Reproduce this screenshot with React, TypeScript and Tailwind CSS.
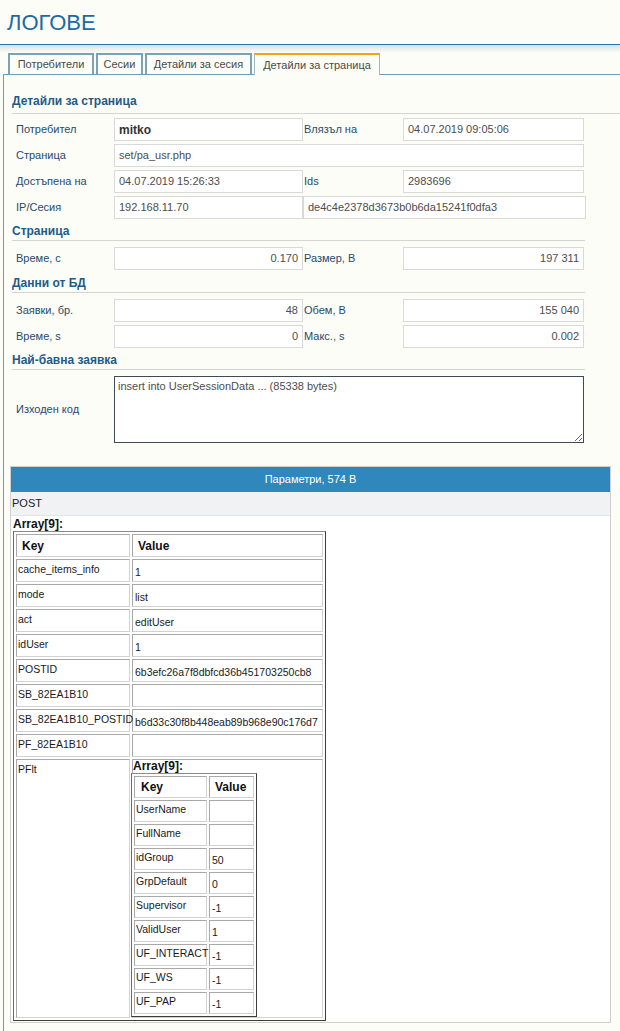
import React from "react";

type P = { children?: React.ReactNode; className?: string };

const Box = ({
  children,
  className = "",
  right = false,
  bold = false,
}: P & { right?: boolean; bold?: boolean }) => (
  <div
    className={
      "flex h-[23px] shrink-0 items-center whitespace-nowrap border border-[#d9d9d9] bg-white px-[4px] " +
      (right ? "justify-end " : "") +
      (bold ? "text-[12px] font-bold text-[#333] " : "text-[11px] text-[#4d4d4d] ") +
      className
    }
  >
    {children}
  </div>
);

const Label = ({ children, className = "" }: P) => (
  <div className={"shrink-0 text-[11px] text-[#284a6c] " + className}>{children}</div>
);

const Heading = ({ children, className = "" }: P) => (
  <div
    className={
      "ml-[8px] border-b border-[#d4d4d4] text-[12px] font-bold leading-[14px] text-[#1e5b8a] " +
      className
    }
  >
    {children}
  </div>
);

const postRows: [string, string][] = [
  ["cache_items_info", "1"],
  ["mode", "list"],
  ["act", "editUser"],
  ["idUser", "1"],
  ["POSTID", "6b3efc26a7f8dbfcd36b451703250cb8"],
  ["SB_82EA1B10", ""],
  ["SB_82EA1B10_POSTID", "b6d33c30f8b448eab89b968e90c176d7"],
  ["PF_82EA1B10", ""],
];

const pfltRows: [string, string][] = [
  ["UserName", ""],
  ["FullName", ""],
  ["idGroup", "50"],
  ["GrpDefault", "0"],
  ["Supervisor", "-1"],
  ["ValidUser", "1"],
  ["UF_INTERACT", "-1"],
  ["UF_WS", "-1"],
  ["UF_PAP", "-1"],
];

const tableCls =
  "table-fixed border-separate border-spacing-[2px] border border-t-[#8a8a8a] border-l-[#6a6a6a] border-r-[#3c3c3c] border-b-[#3c3c3c] bg-white";
const cell = "border border-t-[#a8a8a8] border-l-[#a8a8a8] border-r-[#d2d2d2] border-b-[#d2d2d2]";

const ArrayTitle = () => (
  <div className="text-[12px] font-bold leading-[13px] text-[#111]">Array[9]:</div>
);

const Nested = () => (
  <table className={tableCls + " -ml-[2px] w-[126px]"}>
    <thead>
      <tr>
        <th className={cell + " h-[22px] w-[73px] pl-[6px] text-left text-[12px] font-bold text-[#111]"}>Key</th>
        <th className={cell + " h-[22px] pl-[5px] text-left text-[12px] font-bold text-[#111]"}>Value</th>
      </tr>
    </thead>
    <tbody>
      {pfltRows.map(([k, v]) => (
        <tr key={k}>
          <td className={cell + " h-[22px] whitespace-nowrap pl-[1px] pt-[2px] align-top leading-[13px]"}>{k}</td>
          <td className={cell + " h-[22px] pl-[2px] pt-[5px] align-top leading-[13px]"}>{v}</td>
        </tr>
      ))}
    </tbody>
  </table>
);

export default function App() {
  return (
    <div className="flex min-h-[1031px] flex-col bg-[#fcfdf6] font-['Liberation_Sans',Arial,sans-serif]">
      <div className="flex h-[45px] items-center border-b border-[#2a74a8] px-[7px]">
        <h1 className="text-[22px] font-normal text-[#1b6aa6]">ЛОГОВЕ</h1>
      </div>
      <div className="h-[8px] bg-gradient-to-b from-[#dde2e1] to-[#fcfdf6]" />

      <div className="flex items-end gap-[2px] pl-[8px]">
        {["Потребители", "Сесии", "Детайли за сесия"].map((t, i) => (
          <div
            key={t}
            className={
              "flex h-[21px] items-center justify-center border-2 border-b-0 border-[#7ba2b5] text-[11px] text-[#4a4a4a] " +
              (i === 0 ? "w-[86px]" : i === 1 ? "w-[47px]" : "w-[107px]")
            }
          >
            {t}
          </div>
        ))}
        <div className="relative z-10 -mb-px flex h-[22px] w-[126px] items-center justify-center border border-b-0 border-t-2 border-[#9db7c4] border-t-[#f5a01a] bg-[#fcfdf6] text-[11px] text-[#4a4a4a]">
          Детайли за страница
        </div>
      </div>

      <div className="ml-[3px] flex flex-1 flex-col border-l border-t border-[#6f9cb1] pl-0">
        <Heading className="mt-[19px] pb-[5px]">Детайли за страница</Heading>

        <div className="mt-[4px] flex flex-col gap-[3px] pl-[12px]">
          <div className="flex items-center">
            <Label className="w-[98px]">Потребител</Label>
            <Box bold className="w-[189px]">mitko</Box>
            <Label className="w-[100px] pl-[1px]">Влязъл на</Label>
            <Box className="w-[181px]">04.07.2019 09:05:06</Box>
          </div>
          <div className="flex items-center">
            <Label className="w-[98px]">Страница</Label>
            <Box className="w-[470px]">set/pa_usr.php</Box>
          </div>
          <div className="flex items-center">
            <Label className="w-[98px]">Достъпена на</Label>
            <Box className="w-[189px]">04.07.2019 15:26:33</Box>
            <Label className="w-[100px] pl-[1px]">Ids</Label>
            <Box className="w-[181px]">2983696</Box>
          </div>
          <div className="flex items-center">
            <Label className="w-[98px]">IP/Сесия</Label>
            <Box className="w-[189px]">192.168.11.70</Box>
            <Box className="w-[283px]">de4c4e2378d3673b0b6da15241f0dfa3</Box>
          </div>
        </div>

        <Heading className="mr-[35px] mt-[5px] pb-[2px]">Страница</Heading>
        <div className="mt-[6px] flex items-center pl-[12px]">
          <Label className="w-[98px]">Време, с</Label>
          <Box right className="w-[189px]">0.170</Box>
          <Label className="w-[100px] pl-[1px]">Размер, B</Label>
          <Box right className="w-[181px]">197 311</Box>
        </div>

        <Heading className="mr-[35px] mt-[6px] pb-[2px]">Данни от БД</Heading>
        <div className="mt-[6px] flex flex-col gap-[3px] pl-[12px]">
          <div className="flex items-center">
            <Label className="w-[98px]">Заявки, бр.</Label>
            <Box right className="w-[189px]">48</Box>
            <Label className="w-[100px] pl-[1px]">Обем, B</Label>
            <Box right className="w-[181px]">155 040</Box>
          </div>
          <div className="flex items-center">
            <Label className="w-[98px]">Време, s</Label>
            <Box right className="w-[189px]">0</Box>
            <Label className="w-[100px] pl-[1px]">Макс., s</Label>
            <Box right className="w-[181px]">0.002</Box>
          </div>
        </div>

        <Heading className="mr-[35px] mt-[5px] pb-[2px]">Най-бавна заявка</Heading>
        <div className="mt-[6px] flex items-center pl-[12px]">
          <Label className="w-[98px]">Изходен код</Label>
          <textarea
            readOnly
            defaultValue="insert into UserSessionData ... (85338 bytes)"
            className="h-[67px] w-[470px] border border-[#3d4a5a] bg-white px-[3px] py-[2px] text-[11px] leading-[14px] text-[#4d4d4d] outline-none"
          />
        </div>

        <div className="ml-[6px] mt-[23px] w-[601px] border border-[#cfcfcf] bg-white pb-[1px]">
          <div className="flex h-[25px] items-center justify-center bg-[#3087bb] text-[11px] text-white">
            Параметри, 574 B
          </div>
          <div className="flex h-[24px] items-center border-b border-[#e4e4e4] bg-[#f1f2f4] pl-[1px] text-[11px] text-[#222]">
            POST
          </div>
          <div className="pl-[2px] pt-[2px]">
            <ArrayTitle />
            <table className={tableCls + " w-[313px] text-[10.5px] text-[#1a1a1a]"}>
              <thead>
                <tr>
                  <th className={cell + " h-[23px] w-[114px] pl-[5px] text-left text-[12px] font-bold text-[#111]"}>Key</th>
                  <th className={cell + " h-[23px] pl-[5px] text-left text-[12px] font-bold text-[#111]"}>Value</th>
                </tr>
              </thead>
              <tbody>
                {postRows.map(([k, v]) => (
                  <tr key={k}>
                    <td className={cell + " h-[23px] whitespace-nowrap pl-[1px] pt-[3px] align-top leading-[13px]"}>{k}</td>
                    <td className={cell + " h-[23px] whitespace-nowrap pl-[2px] pt-[6px] align-top leading-[13px]"}>{v}</td>
                  </tr>
                ))}
                <tr>
                  <td className={cell + " pl-[1px] pt-[3px] align-top leading-[13px]"}>PFlt</td>
                  <td className={cell + " pl-0 align-top"}>
                    <ArrayTitle />
                    <Nested />
                  </td>
                </tr>
              </tbody>
            </table>
          </div>
        </div>
      </div>
    </div>
  );
}
